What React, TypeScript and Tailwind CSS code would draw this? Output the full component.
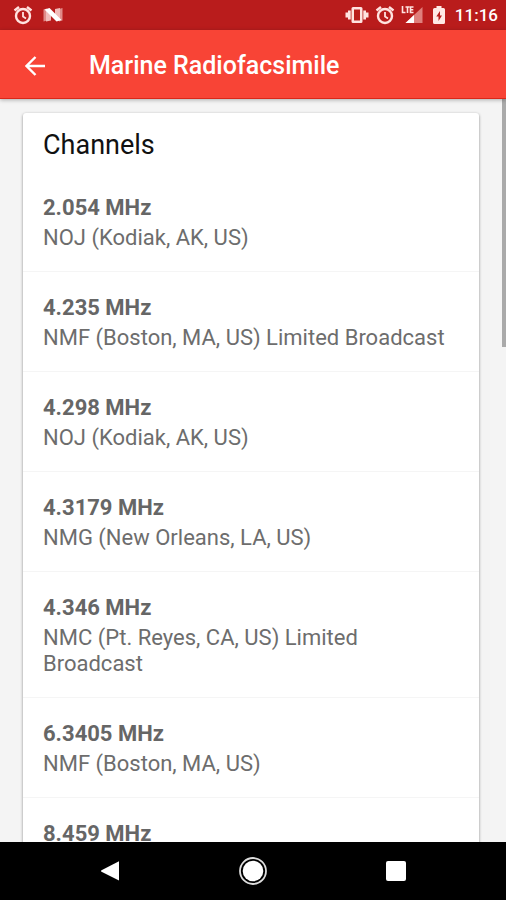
type Channel = { frequency: string; station?: string };

const channels: Channel[] = [
  { frequency: '2.054 MHz', station: 'NOJ (Kodiak, AK, US)' },
  { frequency: '4.235 MHz', station: 'NMF (Boston, MA, US) Limited Broadcast' },
  { frequency: '4.298 MHz', station: 'NOJ (Kodiak, AK, US)' },
  { frequency: '4.3179 MHz', station: 'NMG (New Orleans, LA, US)' },
  { frequency: '4.346 MHz', station: 'NMC (Pt. Reyes, CA, US) Limited Broadcast' },
  { frequency: '6.3405 MHz', station: 'NMF (Boston, MA, US)' },
  { frequency: '8.459 MHz' },
];

function AlarmIcon() {
  return (
    <svg viewBox="0 0 20 20" className="size-5" fill="none" stroke="#ffe3e0" aria-hidden="true">
      <circle cx="10" cy="11" r="7" strokeWidth="2.400" />
      <path d="M10 7v4.500l3 2" strokeWidth="1.800" />
      <path d="M1.500 5.500L6 2M18.500 5.500L14 2" strokeWidth="2.400" />
    </svg>
  );
}

function NougatIcon() {
  return (
    <svg viewBox="0 0 20 16" className="h-4 w-5" aria-hidden="true">
      <path d="M.5 2.500L4 1.500v12l-3.500 1zM16 2l3.500-1v12.500l-3.500 1z" fill="#e08a88" />
      <path d="M3 2.500l5 4v7l-5 1zM12 2l5-1v12.500L12 8z" fill="#f0bbb9" />
      <path d="M1.500 2.500L6.500 1 18.500 13l-5 1.500z" fill="#fff" />
    </svg>
  );
}

function VibrateIcon() {
  return (
    <svg viewBox="0 0 24 20" className="h-5 w-6 fill-[#ffe3e0]" aria-hidden="true">
      <path fillRule="evenodd" d="M8 2h8a1.500 1.500 0 0 1 1.500 1.500v13A1.500 1.500 0 0 1 16 18H8a1.500 1.500 0 0 1-1.500-1.500v-13A1.500 1.500 0 0 1 8 2zM9 4.500v11h6v-11z" />
      <path d="M3 5.500h2.700v9H3V12.500H.5v-5H3zM21 5.500h-2.700v9H21V12.500h2.500v-5H21z" />
    </svg>
  );
}

function SignalIcon() {
  return (
    <svg viewBox="0 0 22 20" className="h-5 w-[22px]" aria-hidden="true">
      <path d="M21.500 2v16H4.500z" fill="#df7f7c" />
      <path d="M13 10v8H4.500z" fill="#fff" />
      <path d="M1.500 1v6.500h3M4.500 2h4M6.500 2v6M12.500 2h-3v5.500h3M9.500 4.700h2.800" fill="none" stroke="#ffe3e0" strokeWidth="1.600" />
    </svg>
  );
}

function BatteryIcon() {
  return (
    <svg viewBox="0 0 12 20" className="h-5 w-3" aria-hidden="true">
      <path d="M3.500 1h5v2h2A1.500 1.500 0 0 1 12 4.500v13a1.500 1.500 0 0 1-1.500 1.500h-9A1.500 1.500 0 0 1 0 17.500v-13A1.500 1.500 0 0 1 1.500 3h2z" fill="#ffe9e6" />
      <path d="M7 6l-3.700 5.500h2.200V16L9 10.500H7z" fill="#b71c1c" />
    </svg>
  );
}

function StatusBar() {
  return (
    <div className="flex h-[30px] shrink-0 items-center justify-between bg-[#b91c1c] pr-2 pl-[13px] text-white">
      <div className="flex items-center gap-[10px]">
        <AlarmIcon />
        <NougatIcon />
      </div>
      <div className="flex items-center gap-[6px]">
        <VibrateIcon />
        <AlarmIcon />
        <SignalIcon />
        <span className="px-1">
          <BatteryIcon />
        </span>
        <time className="text-[17px] leading-5 font-medium">11:16</time>
      </div>
    </div>
  );
}

function AppBar() {
  return (
    <header className="relative z-10 flex h-[69px] shrink-0 items-center border-b border-[#d9281a] bg-[#f84436] pt-[3px] pl-5 text-white shadow-[0_1px_4px_rgba(0,0,0,0.3)]">
      <button type="button" aria-label="Back" className="flex size-[30px] items-center justify-center">
        <svg viewBox="0 0 20 20" className="size-5" fill="none" stroke="#fff" strokeWidth="2.400" aria-hidden="true">
          <path d="M20 10H2M10.500 1L1.500 10l9 9" />
        </svg>
      </button>
      <h1 className="ml-[39px] text-[25px] font-medium">Marine Radiofacsimile</h1>
    </header>
  );
}

function ChannelRow({ frequency, station }: Channel) {
  return (
    <li className="border-b border-[#f5f5f5] px-5 pt-[23px] pb-5 text-[22px] leading-[26px] text-[#6d6d6d]">
      <h3 className="mb-1 font-bold text-[#666]">{frequency}</h3>
      {station && <p>{station}</p>}
    </li>
  );
}

function NavigationBar() {
  return (
    <nav className="flex h-[58px] shrink-0 items-center justify-between bg-black px-[95px]">
      <button type="button" aria-label="Back" className="flex size-[30px] items-center justify-center">
        <svg viewBox="0 0 20 22" className="h-[22px] w-5 fill-white" aria-hidden="true">
          <path d="M19 1.500v19L1.500 11.700a.8.8 0 0 1 0-1.400L19 1.200z" />
        </svg>
      </button>
      <button type="button" aria-label="Home" className="flex size-[30px] items-center justify-center">
        <svg viewBox="0 0 30 30" className="size-[30px]" aria-hidden="true">
          <circle cx="15" cy="15" r="13" fill="none" stroke="#ddd" strokeWidth="1.800" />
          <circle cx="15" cy="15" r="10.300" fill="#fff" />
        </svg>
      </button>
      <button type="button" aria-label="Recent apps" className="flex size-[30px] items-center justify-center">
        <span className="size-5 rounded-[2px] bg-white" />
      </button>
    </nav>
  );
}

export default function App() {
  return (
    <div className="flex h-screen flex-col bg-[#f4f4f4] font-[Roboto,sans-serif]">
      <StatusBar />
      <AppBar />
      <main className="relative min-h-0 flex-1 overflow-hidden pt-[14px] pr-[27px] pl-[23px]">
        <section className="rounded-[3px] bg-white shadow-[0_1px_3px_rgba(0,0,0,0.45)]">
          <h2 className="px-5 pt-[17px] pb-3 text-[27px] leading-[30px] text-[#111]">Channels</h2>
          <ul>
            {channels.map((channel) => (
              <ChannelRow key={channel.frequency} {...channel} />
            ))}
          </ul>
        </section>
        <div className="absolute top-0 right-0 h-1/3 w-1 bg-[#aaa]" />
      </main>
      <NavigationBar />
    </div>
  );
}
